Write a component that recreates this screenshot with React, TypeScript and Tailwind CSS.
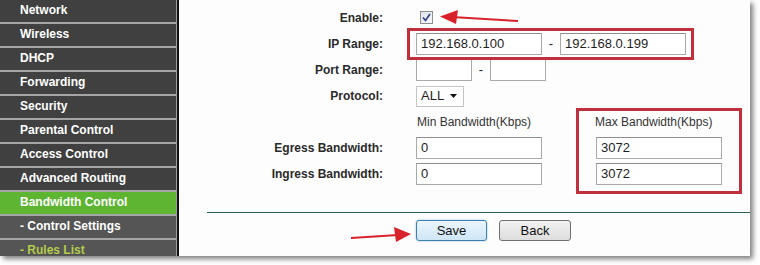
import React from "react"

const menu = [
    { name: "Network" },
    { name: "Wireless" },
    { name: "DHCP" },
    { name: "Forwarding" },
    { name: "Security" },
    { name: "Parental Control" },
    { name: "Access Control" },
    { name: "Advanced Routing" },
    { name: "Bandwidth Control", active: true },
    { name: "- Control Settings", sub: true },
    { name: "- Rules List", sub: true, current: true },
]

function TextBox({ value, w = "w-[126px]" }: { value?: string; w?: string }) {
    return (
        <div className={`${w} h-[22px] border border-[#a9a9a9] border-t-[#8f8f8f] bg-white flex items-center pl-[4px] text-[13px] text-[#1e1e1e]`}>
            {value}
        </div>
    )
}

function Row({ label, h = "h-[26px]", children }: { label?: string; h?: string; children?: React.ReactNode }) {
    return (
        <div className={`flex items-center ${h}`}>
            <div className="w-[204px] text-right text-[12px] font-bold text-[#2a2a2a]">{label}</div>
            <div className="ml-[33px] flex items-center">{children}</div>
        </div>
    )
}

export default function App() {
    return (
        <div className="w-[760px] h-[265px] bg-white overflow-hidden" style={{ fontFamily: '"Liberation Sans", Arial, sans-serif' }}>
            <div className="relative w-[750px] h-[256px] flex shadow-[3px_3px_5px_rgba(0,0,0,0.5)] overflow-hidden">

                {/* menu lateral */}
                <div className="w-[177px] shrink-0 bg-[#4a4a4a] border-r border-[#9d9d9d] flex flex-col">
                    {menu.map((item) => {
                        const bg = item.active ? "bg-[#5db532]" : item.sub ? "bg-[#555555]" : "bg-[#404040]"
                        const color = item.current ? "text-[#b3cc4a]" : "text-white"
                        return (
                            <div
                                key={item.name}
                                className={`h-[24px] shrink-0 flex items-center pl-[20px] pb-[2px] text-[12px] font-bold border-b-2 border-[#a5a5a5] ${bg} ${color}`}
                            >
                                {item.name}
                            </div>
                        )
                    })}
                </div>
                <div className="w-[2px] shrink-0 bg-[#111111]" />

                {/* formulario */}
                <div className="relative flex-1 bg-[#fdfdfd] pt-[4px]">
                    <Row label="Enable:" h="h-[27px]">
                        <div className="ml-[4px] w-[13px] h-[13px] border border-[#8e8f8f] bg-gradient-to-br from-[#dfe3ee] to-[#f8f9fb] flex items-center justify-center">
                            <svg width="9" height="9" viewBox="0 0 9 9">
                                <path d="M1 4.5 L3.5 7.5 L8 1" fill="none" stroke="#2b3f82" strokeWidth="1.6" />
                            </svg>
                        </div>
                    </Row>
                    <Row label="IP Range:">
                        <TextBox value="192.168.0.100" />
                        <span className="w-[18px] text-center text-[13px] text-[#222]">-</span>
                        <TextBox value="192.168.0.199" />
                    </Row>
                    <Row label="Port Range:">
                        <TextBox w="w-[56px]" />
                        <span className="w-[18px] text-center text-[13px] text-[#222]">-</span>
                        <TextBox w="w-[56px]" />
                    </Row>
                    <Row label="Protocol:">
                        <div className="w-[48px] h-[21px] border border-[#c4c4c4] bg-white flex items-center justify-between pl-[4px] pr-[6px] text-[13px] text-[#1e1e1e]">
                            <span>ALL</span>
                            <svg width="7" height="4" viewBox="0 0 7 4">
                                <path d="M0 0 L7 0 L3.5 4 Z" fill="#111" />
                            </svg>
                        </div>
                    </Row>
                    <Row>
                        <div className="w-[179px] pl-[1px] text-[12px] text-[#333]">Min Bandwidth(Kbps)</div>
                        <div className="text-[12px] text-[#333]">Max Bandwidth(Kbps)</div>
                    </Row>
                    <Row label="Egress Bandwidth:">
                        <TextBox value="0" />
                        <div className="w-[54px]" />
                        <TextBox value="3072" />
                    </Row>
                    <Row label="Ingress Bandwidth:">
                        <TextBox value="0" />
                        <div className="w-[54px]" />
                        <TextBox value="3072" />
                    </Row>

                    <div className="mt-[25px] ml-[28px] h-px bg-[#2f6152]" />

                    <div className="mt-[7px] ml-[237px] flex gap-[12px]">
                        <button className="w-[71px] h-[21px] rounded-[3px] border border-[#3c7fb1] bg-gradient-to-b from-[#eaf6fd] to-[#cfe6f5] text-[13px] text-[#111] shadow-[0_0_2px_rgba(60,127,177,0.6)]">
                            Save
                        </button>
                        <button className="w-[72px] h-[21px] rounded-[3px] border border-[#707070] bg-gradient-to-b from-[#f2f2f2] to-[#dddddd] text-[13px] text-[#111]">
                            Back
                        </button>
                    </div>

                    {/* marcas rojas */}
                    <div className="absolute left-[228px] top-[28px] w-[287px] h-[32px] border-[3px] border-[#c0303c]" />
                    <div className="absolute left-[397px] top-[108px] w-[166px] h-[86px] border-[3px] border-[#c0303c]" />
                </div>

                <svg className="absolute left-0 top-0 pointer-events-none" width="750" height="256">
                    <line x1="518" y1="21" x2="452" y2="17" stroke="#d8222b" strokeWidth="2" />
                    <path d="M440 16.5 L458 10 L456 24 Z" fill="#d8222b" />
                    <line x1="351" y1="238" x2="398" y2="235" stroke="#d8222b" strokeWidth="2" />
                    <path d="M411 234 L394 227 L396 242 Z" fill="#d8222b" />
                </svg>
            </div>
        </div>
    )
}
